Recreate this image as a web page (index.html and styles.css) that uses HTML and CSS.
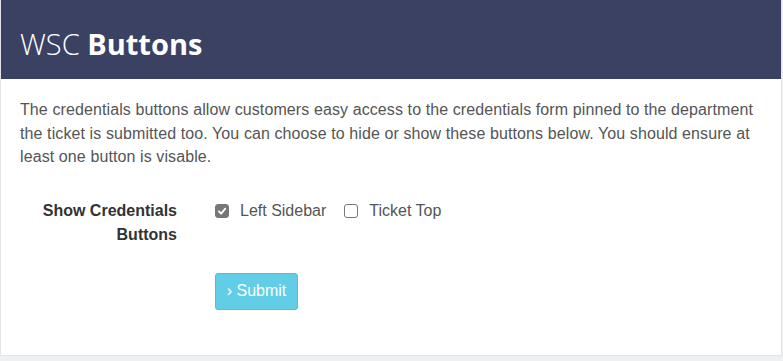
FILE: index.html
```html
<!DOCTYPE html>
<html>
<head>
<meta charset="utf-8">
<link rel="stylesheet" href="styles.css">
</head>
<body>
<div class="card">
  <div class="card-head">
    <h1 class="title"><span class="light">WSC</span> <span class="bold">Buttons</span></h1>
  </div>
  <div class="card-body">
    <p class="desc">The credentials buttons allow customers easy access to the credentials form pinned to the department the ticket is submitted too. You can choose to hide or show these buttons below. You should ensure at least one button is visable.</p>
    <div class="form-row">
      <div class="label">Show Credentials Buttons</div>
      <div class="options">
        <label class="opt"><span class="box checked"><svg viewBox="0 0 14 14" width="14" height="14"><path d="M3.4 7.4 L6 10 L10.8 4.3" fill="none" stroke="#fff" stroke-width="2.2" stroke-linecap="round" stroke-linejoin="round"/></svg></span>Left Sidebar</label>
        <label class="opt"><span class="box"></span>Ticket Top</label>
      </div>
    </div>
    <div class="submit-row">
      <button class="btn">› Submit</button>
    </div>
  </div>
</div>
</body>
</html>
```
FILE: styles.css
```css
html, body { margin: 0; padding: 0; }
body {
  background: #eef0f4;
  font-family: "Liberation Sans", Arial, sans-serif;
  width: 783px;
  height: 361px;
  overflow: hidden;
}
.card {
  width: 780px;
  height: 355px;
  background: #fff;
  border: 1px solid #e2e4e8;
  border-top: none;
}
.card-head {
  background: #3a4163;
  height: 79px;
  display: flex;
  align-items: center;
  padding-left: 19px;
}
.title {
  margin: 0;
  font-family: "Open Sans", sans-serif;
  font-size: 29px;
  color: #fff;
  font-weight: 300;
  padding-top: 8px;
}
.title .bold { font-weight: 700; }
.card-body { padding: 19px 19px 0 19px; }
.desc {
  margin: 0;
  font-size: 16px;
  line-height: 23.5px;
  color: #555;
  letter-spacing: 0.1px;
}
.form-row {
  display: flex;
  margin-top: 30px;
}
.label {
  width: 157px;
  text-align: right;
  font-weight: 700;
  font-size: 16px;
  line-height: 24px;
  color: #333;
}
.options {
  display: flex;
  margin-left: 38px;
  gap: 18px;
  font-size: 16px;
  color: #555;
  line-height: 24px;
  height: 24px;
}
.opt { display: flex; align-items: center; }
.box {
  width: 12px;
  height: 12px;
  border: 1px solid #777;
  border-radius: 3px;
  margin-right: 11px;
  display: inline-flex;
  align-items: center;
  justify-content: center;
  box-sizing: content-box;
  background: #fff;
}
.box.checked {
  background: #777;
  border-color: #777;
}
.submit-row {
  margin-top: 26px;
  padding-left: 195px;
}
.btn {
  font-family: "Liberation Sans", Arial, sans-serif;
  font-size: 16px;
  color: #fff;
  background: #62cde6;
  border: 1px solid #4bbfdb;
  border-radius: 3px;
  width: 83px;
  height: 37px;
  padding: 0;
  cursor: pointer;
}
```
